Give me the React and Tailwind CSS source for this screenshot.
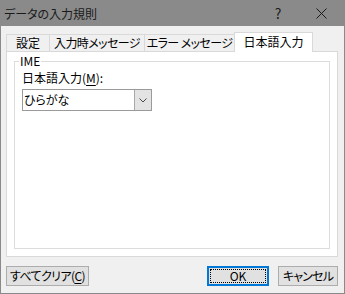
import React from 'react';

/* ── Dialog tabs ───────────────────────────────────────────────── */
const TABS = [
  { label: '設定', w: 'w-[44px]' },
  { label: '入力時メッセージ', w: 'w-[96px] tracking-[-0.6px]' },
  { label: 'エラー メッセージ', w: 'w-[91px] tracking-[-0.6px]' },
];

const FONT = "[font-family:'Noto_Sans_CJK_JP','Noto_Sans',sans-serif] [font-feature-settings:'palt']";

function Tab({ label, w }) {
  return (
    <div
      className={`${w} h-[17px] -ml-px first:ml-0 border border-b-0 border-[#d9d9d9] bg-[#f0f0f0] flex items-center justify-center whitespace-nowrap text-[12px] leading-none text-black`}
    >
      {label}
    </div>
  );
}

function Button({ children, className = '' }) {
  return (
    <div
      className={`h-[20px] border border-[#adadad] bg-[#e1e1e1] flex items-center justify-center whitespace-nowrap text-[12px] leading-none text-black ${className}`}
    >
      {children}
    </div>
  );
}

export default function App() {
  return (
    <div className={`w-[345px] h-[294px] border border-[#8a8a8a] bg-[#f0f0f0] flex flex-col ${FONT}`}>
      {/* Title bar */}
      <div className="h-[25px] bg-[#8a8a8a] flex items-center pl-[3px] text-[12px] text-[#1a1a1a] shrink-0">
        <span className="flex-1">データの入力規則</span>
        <span className="w-[10px] text-center text-[14px] mr-[33px]">?</span>
        <svg width="11" height="11" viewBox="0 0 11 11" className="mr-[17px]" aria-hidden="true">
          <path d="M0.5 0.5L10.5 10.5M10.5 0.5L0.5 10.5" stroke="#1a1a1a" strokeWidth="1" />
        </svg>
      </div>

      <div className="pl-[5px] pr-[6px] pt-[6px] flex flex-col flex-1">
        {/* Tab strip */}
        <div className="flex items-end h-[19px] relative z-10">
          {TABS.map((t) => (
            <Tab key={t.label} {...t} />
          ))}
          <div className="w-[79px] h-[20px] -ml-px -mb-px border border-b-0 border-[#d9d9d9] bg-white flex items-center justify-center whitespace-nowrap text-[12px] leading-none text-black pb-px">
            日本語入力
          </div>
        </div>

        {/* Tab page */}
        <div className="w-[332px] h-[206px] border border-[#d9d9d9] bg-white pl-[7px] pr-[7px] pt-[9px] pb-[7px] flex flex-col">
          <div className="relative flex-1 border border-[#dcdcdc] pt-[9px] pl-[7px]">
            <span className="absolute -top-[8px] left-[4px] bg-white px-px text-[12px] leading-[14px] text-black">
              IME
            </span>
            <div className="text-[12px] leading-[14px] text-black">
              日本語入力(<span className="underline underline-offset-2">M</span>):
            </div>
            <div className="mt-[4px] w-[130px] h-[22px] border border-[#9a9a9a] flex bg-white">
              <div className="flex-1 flex items-center pl-[1px] text-[12px] leading-none text-black">ひらがな</div>
              <div className="w-[17px] bg-[#e3e3e3] border-l border-[#a9a9a9] flex items-center justify-center">
                <svg width="8" height="5" viewBox="0 0 8 5" aria-hidden="true">
                  <path d="M0.5 0.5L4 4L7.5 0.5" stroke="#4a4a4a" strokeWidth="1" fill="none" />
                </svg>
              </div>
            </div>
          </div>
        </div>

        {/* Buttons */}
        <div className="flex items-center mt-[9px]">
          <Button className="w-[83px] tracking-[-0.6px]">
            すべてクリア(<span className="underline underline-offset-2">C</span>)
          </Button>
          <div className="flex-1" />
          <div className="w-[62px] h-[20px] border-2 border-[#0078d7] bg-[#e1e1e1] p-px">
            <div className="w-full h-full border border-dotted border-black flex items-center justify-center text-[12px] leading-none text-black">
              OK
            </div>
          </div>
          <Button className="w-[60px] ml-[9px] tracking-[-0.8px]">キャンセル</Button>
        </div>
      </div>
    </div>
  );
}
